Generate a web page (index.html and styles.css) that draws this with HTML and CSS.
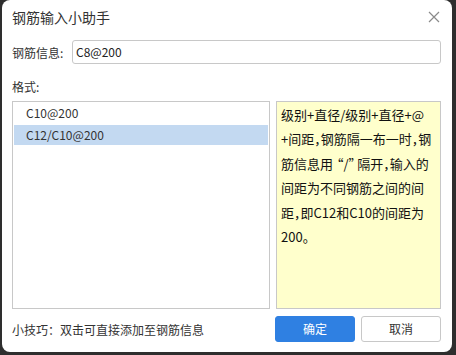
FILE: index.html
```html
<!DOCTYPE html>
<html>
<head lang="zh">
    <meta charset="UTF-8">
    <title>钢筋输入小助手</title>
    <link rel="stylesheet" href="styles.css">
</head>
<body>
<div class="dialog">
    <!--标题栏-->
    <div class="title-bar">
        <span class="title">钢筋输入小助手</span>
        <span class="close">
            <svg width="12" height="12" viewBox="0 0 12 12">
                <path d="M1 1L11 11M11 1L1 11" stroke="#8a8a8a" stroke-width="1.2" fill="none"/>
            </svg>
        </span>
    </div>
    <!--钢筋信息-->
    <div class="field">
        <label class="field-label">钢筋信息:</label>
        <div class="input">C8@200</div>
    </div>
    <div class="section-label">格式:</div>
    <div class="main">
        <ul class="list">
            <li>C10@200</li>
            <li class="current">C12/C10@200</li>
        </ul>
        <div class="note">级别+直径/级别+直径+@<br>+间距，钢筋隔一布一时，钢<br>筋信息用<span class="quote">“/”</span>隔开，输入的<br>间距为不同钢筋之间的间<br>距，即C12和C10的间距为<br>200。</div>
    </div>
    <div class="footer">
        <span class="tip">小技巧：双击可直接添加至钢筋信息</span>
        <span class="btn primary">确定</span>
        <span class="btn">取消</span>
    </div>
</div>
</body>
</html>
```

FILE: styles.css
```css
* {
    margin: 0;
    padding: 0;
    box-sizing: border-box;
}

ul {
    list-style: none;
}

body {
    background-color: #2e2e2e;
    font-family: "Noto Sans CJK SC", "Noto Sans", sans-serif;
    font-size: 12px;
    color: #333;
}

.dialog {
    width: 450px;
    height: 352px;
    margin-left: 2px;
    padding: 0 11px 0 10px;
    background-color: #fff;
    border-radius: 8px;
    display: flex;
    flex-direction: column;
}

.title-bar {
    height: 34px;
    display: flex;
    align-items: center;
    justify-content: space-between;
}

.title {
    font-size: 14px;
    color: #333;
}

.close {
    width: 12px;
    height: 12px;
    margin-right: 1px;
    display: flex;
}

.field {
    margin-top: 6px;
    height: 24px;
    display: flex;
    align-items: center;
}

.field-label {
    width: 60px;
    flex-shrink: 0;
}

.input {
    flex: 1;
    height: 24px;
    line-height: 22px;
    padding-left: 3px;
    border: 1px solid #c8c8c8;
    border-radius: 3px;
    color: #222;
}

.section-label {
    margin-top: 13px;
    height: 20px;
    line-height: 20px;
}

.main {
    margin-top: 4px;
    height: 208px;
    display: flex;
    gap: 6px;
}

.list {
    width: 258px;
    padding: 1px;
    border: 1px solid #c8c8c8;
}

.list li {
    height: 20px;
    line-height: 20px;
    padding-left: 12px;
    margin-bottom: 2px;
}

.list li.current {
    background-color: #c3d9f1;
}

.note {
    flex: 1;
    padding: 1px 0 0 4px;
    border: 1px solid #c8c8c8;
    background-color: #ffffcc;
    font-size: 13px;
    line-height: 24.4px;
    font-feature-settings: "halt";
    white-space: nowrap;
    color: #111;
}

.note .quote {
    padding: 0 2px 0 4px;
}

.footer {
    margin-top: 7px;
    height: 26px;
    display: flex;
    align-items: center;
    gap: 6px;
}

.tip {
    flex: 1;
}

.btn {
    width: 80px;
    height: 26px;
    line-height: 24px;
    text-align: center;
    border: 1px solid #c8c8c8;
    border-radius: 3px;
    color: #333;
}

.btn.primary {
    background-color: #2f80e2;
    border-color: #2f80e2;
    color: #fff;
}
```
